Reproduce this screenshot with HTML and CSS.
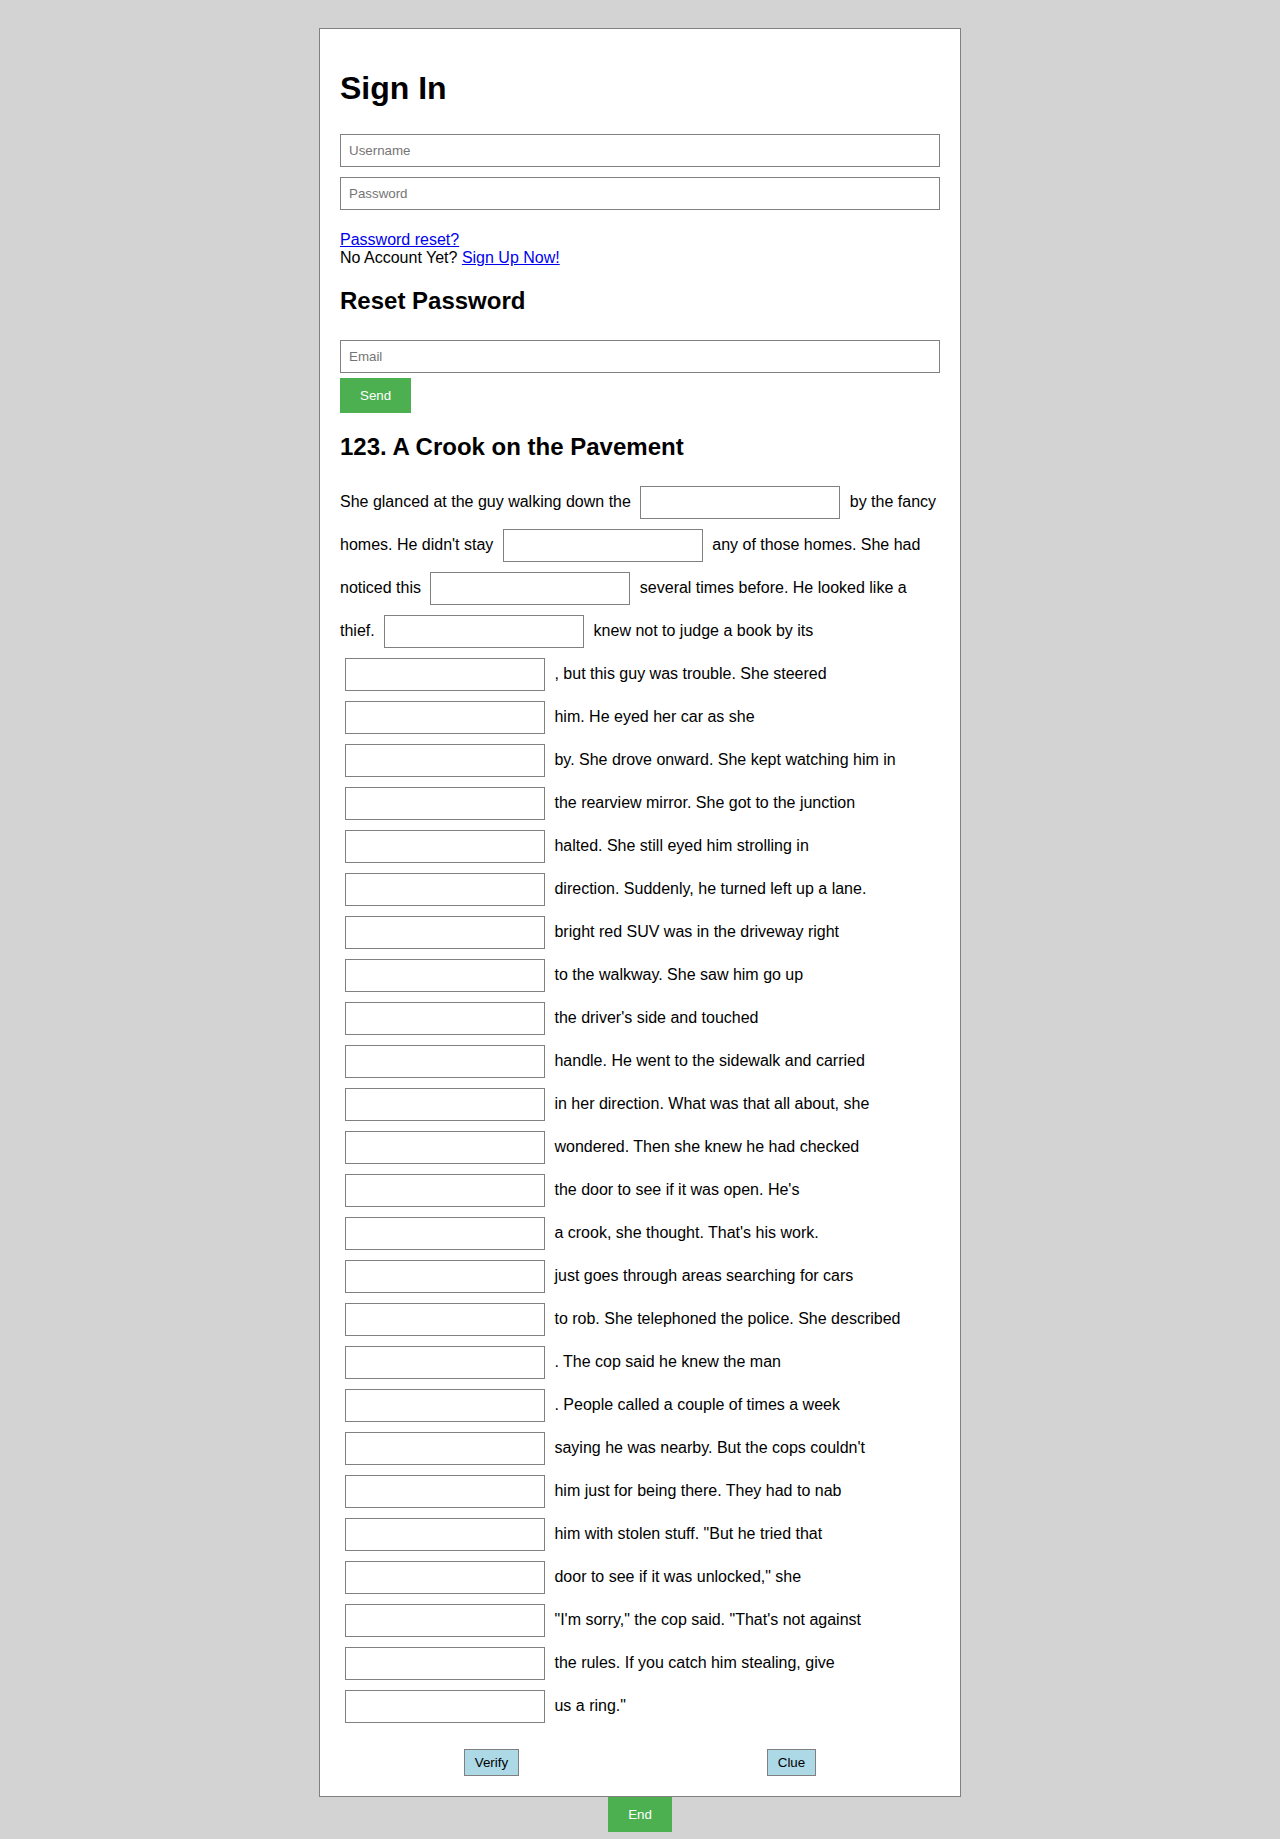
FILE: index.html
```html
<!DOCTYPE html>
<html lang="en">
<head>
<meta charset="utf-8">
<title>Sign In</title>
<link rel="stylesheet" href="styles.css">
</head>
<body>
<div class="container">
  <h1>Sign In</h1>
  <form class="form">
    <input type="text" class="field" placeholder="Username">
    <input type="password" class="field" placeholder="Password">
  </form>
  <p><a href="#">Password reset?</a><br>No Account Yet? <a href="#">Sign Up Now!</a></p>
  <h2>Reset Password</h2>
  <form class="form">
    <input type="email" class="field" placeholder="Email">
    <button type="button" class="btn-green">Send</button>
  </form>
  <h2>123. A Crook on the Pavement</h2>
  <p class="story">She glanced at the guy walking down the <input type="text" class="blank"> by the fancy homes. He didn't stay <input type="text" class="blank"> any of those homes. She had noticed this <input type="text" class="blank"> several times before. He looked like a thief. <input type="text" class="blank"> knew not to judge a book by its <input type="text" class="blank"> , but this guy was trouble. She steered <input type="text" class="blank"> him. He eyed her car as she <input type="text" class="blank"> by. She drove onward. She kept watching him in <input type="text" class="blank"> the rearview mirror. She got to the junction <input type="text" class="blank"> halted. She still eyed him strolling in <input type="text" class="blank"> direction. Suddenly, he turned left up a lane. <input type="text" class="blank"> bright red SUV was in the driveway right <input type="text" class="blank"> to the walkway. She saw him go up <input type="text" class="blank"> the driver's side and touched <input type="text" class="blank"> handle. He went to the sidewalk and carried <input type="text" class="blank"> in her direction. What was that all about, she <input type="text" class="blank"> wondered. Then she knew he had checked <input type="text" class="blank"> the door to see if it was open. He's <input type="text" class="blank"> a crook, she thought. That's his work. <input type="text" class="blank"> just goes through areas searching for cars <input type="text" class="blank"> to rob. She telephoned the police. She described <input type="text" class="blank"> . The cop said he knew the man <input type="text" class="blank"> . People called a couple of times a week <input type="text" class="blank"> saying he was nearby. But the cops couldn't <input type="text" class="blank"> him just for being there. They had to nab <input type="text" class="blank"> him with stolen stuff. "But he tried that <input type="text" class="blank"> door to see if it was unlocked," she <input type="text" class="blank"> "I'm sorry," the cop said. "That's not against <input type="text" class="blank"> the rules. If you catch him stealing, give <input type="text" class="blank"> us a ring."</p>
  <div class="actions">
    <button type="button" class="btn-blue">Verify</button>
    <button type="button" class="btn-blue">Clue</button>
  </div>
</div>
<div class="end-row">
  <button type="button" class="btn-green">End</button>
</div>
</body>
</html>
```

FILE: styles.css
```css
body {
  margin: 8px;
  background: #d3d3d3;
  font-family: "Liberation Sans", Arial, sans-serif;
  font-size: 16px;
  color: #000;
}

.container {
  width: 600px;
  margin: 20px auto 0;
  padding: 20px;
  background: #fff;
  border: 1px solid #808080;
}

h1 {
  font-size: 32px;
  margin: 21.44px 0;
}

h2 {
  font-size: 24px;
  margin: 19.92px 0;
}

p {
  margin: 16px 0;
}

a {
  color: #0000ee;
}

.form {
  margin: 0;
}

.field {
  box-sizing: border-box;
  width: 100%;
  margin: 5px 0;
  padding: 8px;
  border: 1px solid #808080;
  font: 13.333px "Liberation Sans", Arial, sans-serif;
  background: #fff;
}

.field::placeholder,
.blank::placeholder {
  color: #757575;
}

.story {
  margin-bottom: 0;
}

.blank {
  box-sizing: border-box;
  width: 200px;
  margin: 5px;
  padding: 8px;
  border: 1px solid #808080;
  font: 13.333px "Liberation Sans", Arial, sans-serif;
  background: #fff;
}

.btn-green {
  padding: 10px 20px;
  border: none;
  background: #4caf50;
  color: #fff;
  font: 13.333px "Liberation Sans", Arial, sans-serif;
}

.btn-blue {
  padding: 5px 10px;
  border: 1px solid #808080;
  background: #add8e6;
  color: #000;
  font: 13.333px "Liberation Sans", Arial, sans-serif;
}

.actions {
  display: flex;
  justify-content: space-around;
  align-items: center;
  margin-top: 21px;
}

.end-row {
  display: flex;
  justify-content: center;
}
```
